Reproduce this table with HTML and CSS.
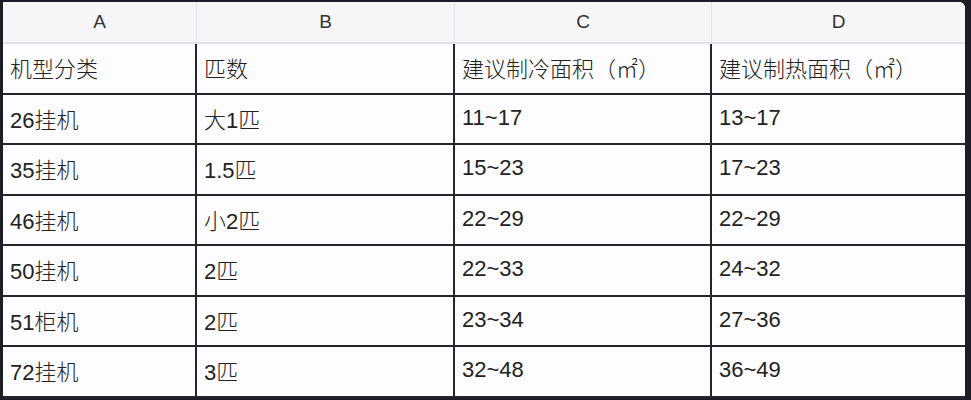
FILE: index.html
```
<!DOCTYPE html>
<html lang="zh">
<head>
<meta charset="utf-8">
<link rel="stylesheet" href="styles.css">
</head>
<body>
<div class="sheet">
  <div class="row head">
    <div class="cell">A</div>
    <div class="cell">B</div>
    <div class="cell">C</div>
    <div class="cell">D</div>
  </div>
  <div class="row">
    <div class="cell">机型分类</div>
    <div class="cell">匹数</div>
    <div class="cell">建议制冷面积（㎡）</div>
    <div class="cell">建议制热面积（㎡）</div>
  </div>
  <div class="row">
    <div class="cell">26挂机</div>
    <div class="cell">大1匹</div>
    <div class="cell">11~17</div>
    <div class="cell">13~17</div>
  </div>
  <div class="row">
    <div class="cell">35挂机</div>
    <div class="cell">1.5匹</div>
    <div class="cell">15~23</div>
    <div class="cell">17~23</div>
  </div>
  <div class="row">
    <div class="cell">46挂机</div>
    <div class="cell">小2匹</div>
    <div class="cell">22~29</div>
    <div class="cell">22~29</div>
  </div>
  <div class="row">
    <div class="cell">50挂机</div>
    <div class="cell">2匹</div>
    <div class="cell">22~33</div>
    <div class="cell">24~32</div>
  </div>
  <div class="row">
    <div class="cell">51柜机</div>
    <div class="cell">2匹</div>
    <div class="cell">23~34</div>
    <div class="cell">27~36</div>
  </div>
  <div class="row">
    <div class="cell">72挂机</div>
    <div class="cell">3匹</div>
    <div class="cell">32~48</div>
    <div class="cell">36~49</div>
  </div>
</div>
</body>
</html>
```
FILE: styles.css
```
html, body {
  margin: 0;
  padding: 0;
  background: #1d1d27;
  height: 400px;
  overflow: hidden;
}
.sheet {
  margin: 2px 0 0 3px;
  width: 962px;
  background: #fdfdff;
  border-top-right-radius: 6px;
  overflow: hidden;
  font-family: "Liberation Sans", "Noto Sans CJK SC", sans-serif;
  color: #222;
}
.row {
  display: grid;
  grid-template-columns: 194px 258px 257px 253px;
  height: 50.5px;
  border-bottom: 2px solid #26262c;
  box-sizing: border-box;
}
.cell {
  display: flex;
  align-items: center;
  padding-left: 7px;
  padding-bottom: 2px;
  font-size: 22px;
  font-weight: 300;
  border-right: 2px solid #26262c;
  box-sizing: border-box;
}
.cell:last-child {
  border-right: none;
}
.row.head {
  height: 42px;
  background: #f6f6f8;
  border-bottom: 2px solid #e2e2e6;
}
.row.head .cell {
  justify-content: center;
  padding-left: 0;
  padding-bottom: 0;
  font-size: 19px;
  color: #333;
  border-right: 1px solid #e2e2e6;
}
.row.head .cell:last-child {
  border-right: none;
}
```
